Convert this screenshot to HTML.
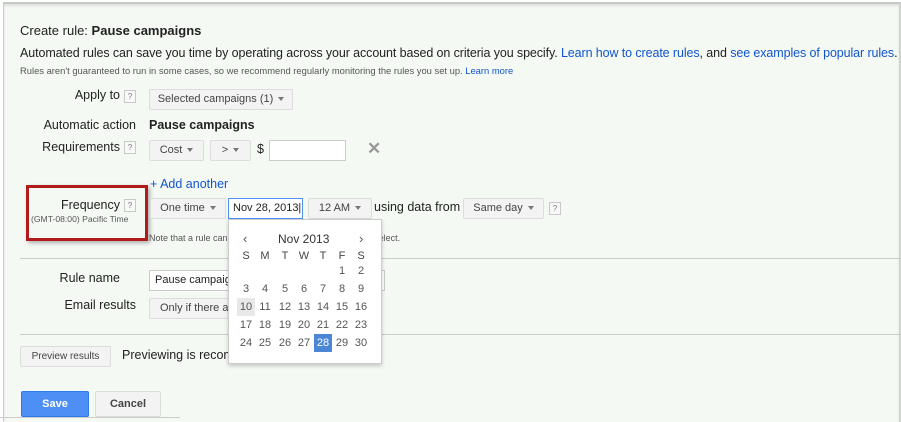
<!DOCTYPE html>
<html><head><style>
body{margin:0;width:901px;height:420px;overflow:hidden;background:#fff;font-family:"Liberation Sans",Arial,sans-serif;}
#p{position:absolute;left:3px;top:2px;width:895px;height:418px;background:#f5f9f4;border-left:1px solid #c8ccc6;border-right:2px solid #d0d4ce;border-top:2px solid #c5c9c3;box-shadow:inset 0 2px 2px #dde0db;}
.a{position:absolute;white-space:nowrap;}
.t{font-size:12.5px;color:#222;}
.s{font-size:9.4px;color:#555;}
.lnk{color:#1155cc;}
.btn{position:absolute;height:19px;border:1px solid #dcdcdc;border-radius:2px;background:#f3f3f3;font-size:11px;color:#444;line-height:19px;box-sizing:content-box;text-align:center;white-space:nowrap;overflow:hidden;}
.car{display:inline-block;width:0;height:0;border-left:3px solid transparent;border-right:3px solid transparent;border-top:4px solid #777;vertical-align:middle;margin-left:5px;}
.q{position:absolute;width:10px;height:11px;border:1px solid #c9c9c9;font-size:8px;color:#777;text-align:center;line-height:11px;background:#f8f8f8;}
.lab{position:absolute;font-size:12.5px;color:#222;white-space:nowrap;}
.inp{position:absolute;height:19px;border:1px solid #ccc;background:#fff;font-size:11px;line-height:19px;padding-left:5px;box-sizing:border-box;white-space:nowrap;overflow:hidden;}
.hr{position:absolute;left:20px;right:0;height:1px;background:#ccc;}
#cal{position:absolute;left:228px;top:219px;width:152px;height:143px;background:#fff;border:1px solid #ccc;box-shadow:0 2px 4px rgba(0,0,0,.2);}
.c{position:absolute;width:18px;height:18px;text-align:center;line-height:18px;font-size:11px;color:#555;}
</style></head><body>
<div id="p"></div>
<div class="a t" style="left:20px;top:23px;font-size:13px;">Create rule: <b>Pause campaigns</b></div>
<div class="a t" style="left:20px;top:46px;letter-spacing:-0.1px;">Automated rules can save you time by operating across your account based on criteria you specify. <span class="lnk">Learn how to create rules</span>, and <span class="lnk">see examples of popular rules</span>.</div>
<div class="a s" style="left:20px;top:65px;">Rules aren't guaranteed to run in some cases, so we recommend regularly monitoring the rules you set up. <span class="lnk">Learn more</span></div>

<div class="lab" style="top:88px;right:781px;">Apply to</div><div class="q" style="left:124px;top:90px;">?</div>
<div class="btn" style="left:149px;top:89px;width:142px;">Selected campaigns (1)<span class="car"></span></div>

<div class="lab" style="top:118px;right:765px;">Automatic action</div>
<div class="a t" style="left:149px;top:118px;font-weight:bold;">Pause campaigns</div>

<div class="lab" style="top:140px;right:781px;">Requirements</div><div class="q" style="left:124px;top:141px;">?</div>
<div class="btn" style="left:149px;top:140px;width:53px;">Cost<span class="car"></span></div>
<div class="btn" style="left:210px;top:140px;width:39px;">&gt;<span class="car"></span></div>
<div class="a t" style="left:257px;top:142px;">$</div>
<div class="inp" style="left:269px;top:140px;width:77px;height:21px;"></div>
<div class="a" style="left:367px;top:139px;font-size:17px;color:#999;font-weight:bold;">✕</div>

<div class="a lnk" style="left:150px;top:177px;font-size:12.5px;">+ Add another</div>

<div style="position:absolute;left:26px;top:185px;width:116px;height:50px;border:3px solid #b11b1b;box-shadow:2px 2px 4px rgba(0,0,0,.3);"></div>
<div class="lab" style="top:198px;right:781px;">Frequency</div><div class="q" style="left:124px;top:199px;">?</div>
<div class="a s" style="left:31px;top:214px;font-size:8.6px;">(GMT-08:00) Pacific Time</div>

<div class="btn" style="left:150px;top:198px;width:74px;">One time<span class="car"></span></div>
<div class="inp" style="left:228px;top:198px;width:75px;height:21px;border-color:#4d90fe;font-size:11px;color:#222;padding-left:4px;">Nov 28, 2013|</div>
<div class="btn" style="left:308px;top:198px;width:62px;">12 AM<span class="car"></span></div>
<div class="a t" style="left:374px;top:200px;">using data from</div>
<div class="btn" style="left:463px;top:198px;width:79px;">Same day<span class="car"></span></div>
<div class="q" style="left:549px;top:202px;">?</div>
<div class="a s" style="left:149px;top:233px;font-size:9px;">Note that a rule can run up to an hour after the hour you select.</div>

<div class="hr" style="top:258px;"></div>
<div class="lab" style="top:271px;right:781px;">Rule name</div>
<div class="inp" style="left:149px;top:270px;width:236px;height:21px;color:#222;">Pause campaigns</div>
<div class="lab" style="top:298px;right:765px;">Email results</div>
<div class="btn" style="left:149px;top:298px;width:200px;text-align:left;padding-left:10px;">Only if there are changes or errors</div>
<div class="hr" style="top:334px;"></div>

<div class="btn" style="left:20px;top:346px;width:89px;font-size:10px;">Preview results</div>
<div class="a t" style="left:122px;top:348px;">Previewing is recommended before saving.</div>

<div class="btn" style="left:21px;top:391px;width:66px;height:24px;line-height:24px;background:#4d8ff5;border-color:#3079ed;color:#fff;font-weight:bold;">Save</div>
<div class="btn" style="left:95px;top:391px;width:64px;height:24px;line-height:24px;font-weight:bold;color:#444;">Cancel</div>
<div style="position:absolute;left:0;top:417px;width:180px;height:1px;background:#ccc;"></div>

<div id="cal">
<div class="a" style="left:14px;top:11px;font-size:13px;color:#555;">‹</div>
<div class="a" style="left:49px;top:12px;font-size:12px;color:#333;">Nov 2013</div>
<div class="a" style="left:130px;top:11px;font-size:13px;color:#555;">›</div>
</div>
<script>
var cols=[246,265,285,304,323,342,361],cal=document.getElementById('cal'),h='';
var L=['S','M','T','W','T','F','S'];
for(var i=0;i<7;i++)h+='<div class="c" style="left:'+(cols[i]-9-229)+'px;top:27px;color:#444;">'+L[i]+'</div>';
var d=1,r=0,c=5;
while(d<=30){var st='';if(d==10)st='background:#e8e8e8;';if(d==28)st='background:#4c87d6;color:#fff;';
h+='<div class="c" style="left:'+(cols[c]-9-229)+'px;top:'+(42+r*18)+'px;'+st+'">'+d+'</div>';d++;c++;if(c>6){c=0;r++;}}
cal.insertAdjacentHTML('beforeend',h);
</script>
</body></html>
